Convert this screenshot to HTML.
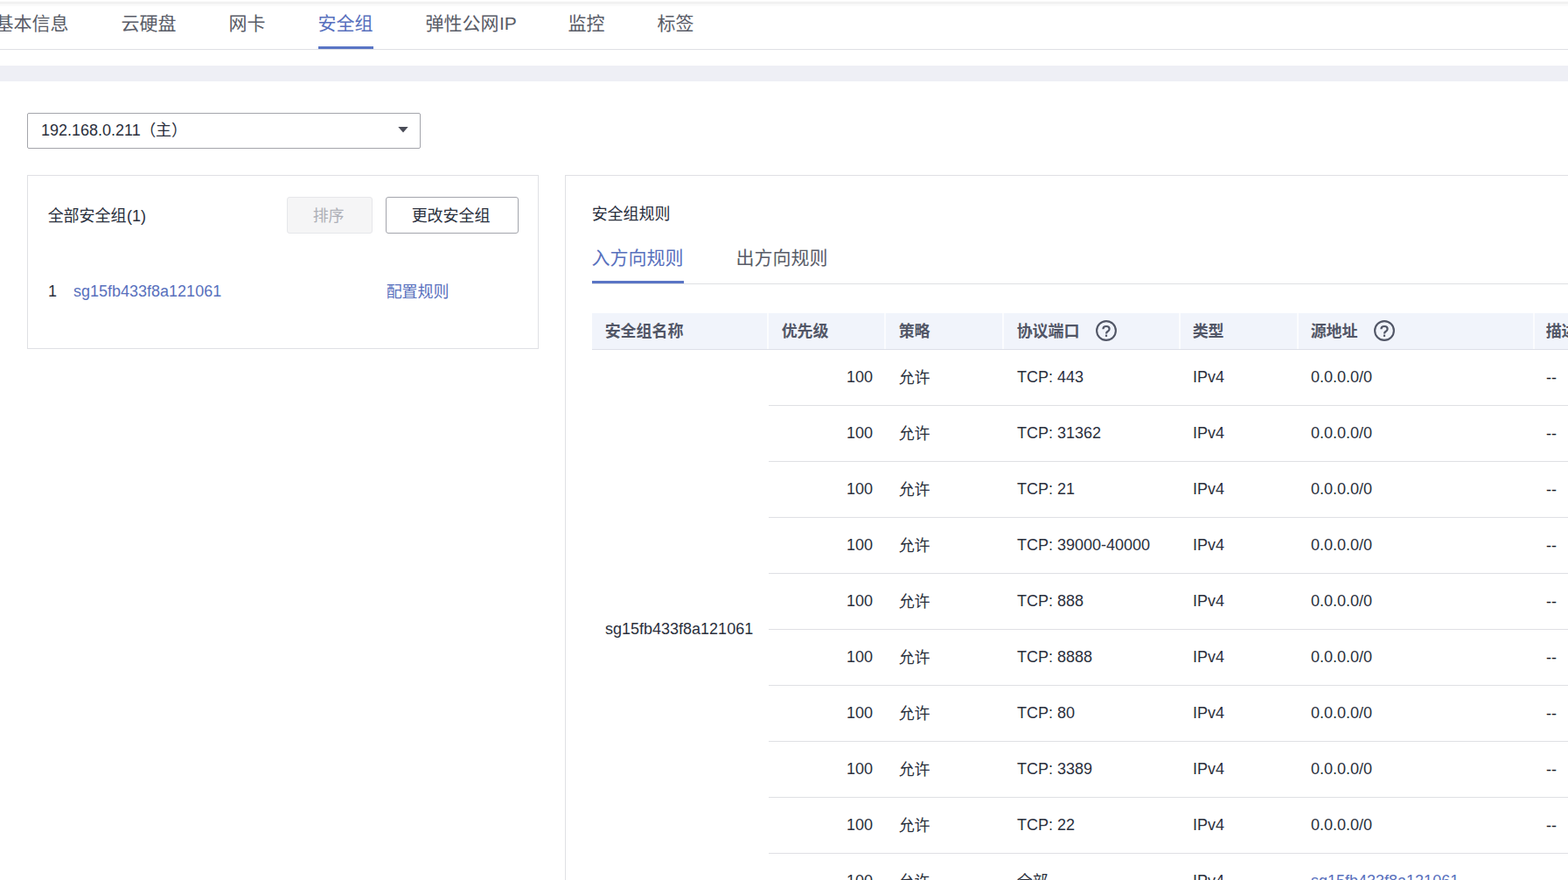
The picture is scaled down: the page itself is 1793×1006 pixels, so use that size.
<!DOCTYPE html>
<html lang="zh-CN"><head><meta charset="utf-8"><title>安全组</title>
<style>
html,body{margin:0;padding:0;background:#fff}
body{width:1793px;height:1006px;overflow:hidden;position:relative;font-family:"Liberation Sans","Noto Sans CJK SC",sans-serif;}
.t{position:absolute;white-space:nowrap;margin:0;overflow:visible}
</style></head><body>
<div style="position:absolute;left:0px;top:0px;width:1793px;height:8px;background:linear-gradient(#ffffff 0px,#ffffff 1px,#fbfbfb 1px,#fbfbfb 2px,#f2f2f2 2px,#f2f2f2 3px,#efefef 3px,#efefef 4px,#f6f6f6 4px,#f6f6f6 5px,#f9f9f9 5px,#f9f9f9 6px,#fafafa 6px,#fafafa 7px,#fefefe 7px,#fefefe 8px)"></div>
<nav aria-label="云服务器详情页签">
<div class="t" style="left:-5.42px;top:13.0px;font-size:21px;line-height:28px;color:#595c67;font-weight:normal">基本信息</div>
<div class="t" style="left:138.58px;top:13.0px;font-size:21px;line-height:28px;color:#595c67;font-weight:normal">云硬盘</div>
<div class="t" style="left:261.58px;top:13.0px;font-size:21px;line-height:28px;color:#595c67;font-weight:normal">网卡</div>
<div class="t" style="left:363.58px;top:13.0px;font-size:21px;line-height:28px;color:#5870bd;font-weight:normal">安全组</div>
<div class="t" style="left:486.58px;top:13.0px;font-size:21px;line-height:28px;color:#595c67;font-weight:normal">弹性公网</div>
<div class="t" style="left:571.00px;top:13.0px;font-size:21px;line-height:28px;color:#595c67;font-weight:normal">IP</div>
<div class="t" style="left:649.58px;top:13.0px;font-size:21px;line-height:28px;color:#595c67;font-weight:normal">监控</div>
<div class="t" style="left:751.58px;top:13.0px;font-size:21px;line-height:28px;color:#595c67;font-weight:normal">标签</div>
<div style="position:absolute;left:0px;top:56px;width:1793px;height:1px;background:#dfe0e4"></div>
<div style="position:absolute;left:364px;top:53px;width:63px;height:3px;background:#5a75c5"></div>
</nav>
<div style="position:absolute;left:0px;top:75px;width:1793px;height:18px;background:#eeeff5"></div>
<div role="combobox" aria-label="网卡">
<div style="position:absolute;left:31px;top:129px;width:448px;height:39px;border:1px solid #a4a5ab;border-radius:2px;background:#fff"></div>
<div class="t" style="left:47.00px;top:137.0px;font-size:18px;line-height:24px;color:#2a2f3c;font-weight:normal">192.168.0.211</div>
<div class="t" style="left:160.14px;top:137.0px;font-size:18px;line-height:24px;color:#2a2f3c;font-weight:normal">（主）</div>
<svg style="position:absolute;left:455px;top:145px" width="12" height="7" viewBox="0 0 12 7"><path d="M0.3 0H11.7L6 6.6Z" fill="#4a4c57"/></svg>
</div>
<section aria-label="全部安全组">
<div style="position:absolute;left:31px;top:200px;width:583px;height:197px;border:1px solid #dfe0e4;background:#fff"></div>
<div class="t" style="left:54.64px;top:235.0px;font-size:18px;line-height:24px;color:#2a2f3c;font-weight:normal">全部安全组</div>
<div class="t" style="left:145.00px;top:235.0px;font-size:18px;line-height:24px;color:#2a2f3c;font-weight:normal">(1)</div>
<div style="position:absolute;left:328px;top:225px;width:96px;height:40px;border:1px solid #e6e7ea;border-radius:3px;background:#f5f5f6"></div>
<div class="t" style="left:357.64px;top:235.0px;font-size:18px;line-height:24px;color:#adafb7;font-weight:normal">排序</div>
<div style="position:absolute;left:441px;top:225px;width:150px;height:40px;border:1px solid #a3a5ac;border-radius:3px;background:#fff"></div>
<div class="t" style="left:470.64px;top:235.0px;font-size:18px;line-height:24px;color:#2a2f3c;font-weight:normal">更改安全组</div>
<div class="t" style="left:55.00px;top:321.0px;font-size:18px;line-height:24px;color:#2a2f3c;font-weight:normal">1</div>
<a class="t" style="left:84.00px;top:321.0px;font-size:18px;line-height:24px;color:#5870bd;font-weight:normal">sg15fb433f8a121061</a>
<div class="t" style="left:441.64px;top:322.0px;font-size:18px;line-height:24px;color:#5870bd;font-weight:normal">配置规则</div>
</section>
<section aria-label="安全组规则">
<div style="position:absolute;left:646px;top:200px;width:1200px;height:900px;border:1px solid #dfe0e4;background:#fff"></div>
<div class="t" style="left:676.64px;top:233.0px;font-size:18px;line-height:24px;color:#2a2f3c;font-weight:normal">安全组规则</div>
<div class="t" style="left:676.58px;top:281.0px;font-size:21px;line-height:28px;color:#5870bd;font-weight:normal">入方向规则</div>
<div class="t" style="left:841.58px;top:281.0px;font-size:21px;line-height:28px;color:#595c67;font-weight:normal">出方向规则</div>
<div style="position:absolute;left:677px;top:324px;width:1200px;height:1px;background:#dfe0e4"></div>
<div style="position:absolute;left:677px;top:321px;width:105px;height:3px;background:#5a75c5"></div>
<div role="table" aria-label="入方向规则">
<div role="row">
<div style="position:absolute;left:677px;top:358px;width:1200px;height:41px;background:#f1f4fb"></div>
<div style="position:absolute;left:677px;top:399px;width:1200px;height:1px;background:#dde0e8"></div>
<div style="position:absolute;left:877px;top:358px;width:2px;height:41px;background:#fbfcfe"></div>
<div style="position:absolute;left:1011px;top:358px;width:2px;height:41px;background:#fbfcfe"></div>
<div style="position:absolute;left:1146px;top:358px;width:2px;height:41px;background:#fbfcfe"></div>
<div style="position:absolute;left:1348px;top:358px;width:2px;height:41px;background:#fbfcfe"></div>
<div style="position:absolute;left:1482.5px;top:358px;width:2px;height:41px;background:#fbfcfe"></div>
<div style="position:absolute;left:1752.5px;top:358px;width:2px;height:41px;background:#fbfcfe"></div>
<div class="t" style="left:691.64px;top:367.2px;font-size:18px;line-height:24px;color:#515666;font-weight:bold">安全组名称</div>
<div class="t" style="left:893.64px;top:367.2px;font-size:18px;line-height:24px;color:#515666;font-weight:bold">优先级</div>
<div class="t" style="left:1027.64px;top:367.2px;font-size:18px;line-height:24px;color:#515666;font-weight:bold">策略</div>
<div class="t" style="left:1162.64px;top:367.2px;font-size:18px;line-height:24px;color:#515666;font-weight:bold">协议端口</div>
<div class="t" style="left:1363.64px;top:367.2px;font-size:18px;line-height:24px;color:#515666;font-weight:bold">类型</div>
<div class="t" style="left:1498.64px;top:367.2px;font-size:18px;line-height:24px;color:#515666;font-weight:bold">源地址</div>
<div class="t" style="left:1767.64px;top:367.2px;font-size:18px;line-height:24px;color:#515666;font-weight:bold">描述</div>
<svg style="position:absolute;left:1252px;top:364.5px" width="26" height="26" viewBox="0 0 26 26"><circle cx="13" cy="13" r="10.9" fill="none" stroke="#515666" stroke-width="2.1"/><path d="M9.4 11.2C9.4 8.9 11 8 13 8C15 8 16.6 9.1 16.6 11C16.6 12.6 15.6 13.2 14.5 14C13.5 14.7 13 15.3 13 16.4" fill="none" stroke="#515666" stroke-width="2.2"/><rect x="11.9" y="17.6" width="2.2" height="2.3" fill="#515666"/></svg>
<svg style="position:absolute;left:1570px;top:364.5px" width="26" height="26" viewBox="0 0 26 26"><circle cx="13" cy="13" r="10.9" fill="none" stroke="#515666" stroke-width="2.1"/><path d="M9.4 11.2C9.4 8.9 11 8 13 8C15 8 16.6 9.1 16.6 11C16.6 12.6 15.6 13.2 14.5 14C13.5 14.7 13 15.3 13 16.4" fill="none" stroke="#515666" stroke-width="2.2"/><rect x="11.9" y="17.6" width="2.2" height="2.3" fill="#515666"/></svg>
</div>
<div role="row">
<div class="t" style="right:795px;top:419.0px;font-size:18px;line-height:24px;color:#2a2f3c;font-weight:normal">100</div>
<div class="t" style="left:1027.64px;top:419.5px;font-size:18px;line-height:24px;color:#2a2f3c;font-weight:normal">允许</div>
<div class="t" style="left:1163.00px;top:419.0px;font-size:18px;line-height:24px;color:#2a2f3c;font-weight:normal">TCP: 443</div>
<div class="t" style="left:1364.00px;top:419.0px;font-size:18px;line-height:24px;color:#2a2f3c;font-weight:normal">IPv4</div>
<div class="t" style="left:1499.00px;top:419.0px;font-size:18px;line-height:24px;color:#2a2f3c;font-weight:normal">0.0.0.0/0</div>
<div class="t" style="left:1768.00px;top:420.0px;font-size:18px;line-height:24px;color:#171a22;font-weight:normal">--</div>
<div style="position:absolute;left:879px;top:463px;width:1000px;height:1px;background:#dfe0e4"></div>
</div>
<div role="row">
<div class="t" style="right:795px;top:483.0px;font-size:18px;line-height:24px;color:#2a2f3c;font-weight:normal">100</div>
<div class="t" style="left:1027.64px;top:483.5px;font-size:18px;line-height:24px;color:#2a2f3c;font-weight:normal">允许</div>
<div class="t" style="left:1163.00px;top:483.0px;font-size:18px;line-height:24px;color:#2a2f3c;font-weight:normal">TCP: 31362</div>
<div class="t" style="left:1364.00px;top:483.0px;font-size:18px;line-height:24px;color:#2a2f3c;font-weight:normal">IPv4</div>
<div class="t" style="left:1499.00px;top:483.0px;font-size:18px;line-height:24px;color:#2a2f3c;font-weight:normal">0.0.0.0/0</div>
<div class="t" style="left:1768.00px;top:484.0px;font-size:18px;line-height:24px;color:#171a22;font-weight:normal">--</div>
<div style="position:absolute;left:879px;top:527px;width:1000px;height:1px;background:#dfe0e4"></div>
</div>
<div role="row">
<div class="t" style="right:795px;top:547.0px;font-size:18px;line-height:24px;color:#2a2f3c;font-weight:normal">100</div>
<div class="t" style="left:1027.64px;top:547.5px;font-size:18px;line-height:24px;color:#2a2f3c;font-weight:normal">允许</div>
<div class="t" style="left:1163.00px;top:547.0px;font-size:18px;line-height:24px;color:#2a2f3c;font-weight:normal">TCP: 21</div>
<div class="t" style="left:1364.00px;top:547.0px;font-size:18px;line-height:24px;color:#2a2f3c;font-weight:normal">IPv4</div>
<div class="t" style="left:1499.00px;top:547.0px;font-size:18px;line-height:24px;color:#2a2f3c;font-weight:normal">0.0.0.0/0</div>
<div class="t" style="left:1768.00px;top:548.0px;font-size:18px;line-height:24px;color:#171a22;font-weight:normal">--</div>
<div style="position:absolute;left:879px;top:591px;width:1000px;height:1px;background:#dfe0e4"></div>
</div>
<div role="row">
<div class="t" style="right:795px;top:611.0px;font-size:18px;line-height:24px;color:#2a2f3c;font-weight:normal">100</div>
<div class="t" style="left:1027.64px;top:611.5px;font-size:18px;line-height:24px;color:#2a2f3c;font-weight:normal">允许</div>
<div class="t" style="left:1163.00px;top:611.0px;font-size:18px;line-height:24px;color:#2a2f3c;font-weight:normal">TCP: 39000-40000</div>
<div class="t" style="left:1364.00px;top:611.0px;font-size:18px;line-height:24px;color:#2a2f3c;font-weight:normal">IPv4</div>
<div class="t" style="left:1499.00px;top:611.0px;font-size:18px;line-height:24px;color:#2a2f3c;font-weight:normal">0.0.0.0/0</div>
<div class="t" style="left:1768.00px;top:612.0px;font-size:18px;line-height:24px;color:#171a22;font-weight:normal">--</div>
<div style="position:absolute;left:879px;top:655px;width:1000px;height:1px;background:#dfe0e4"></div>
</div>
<div role="row">
<div class="t" style="right:795px;top:675.0px;font-size:18px;line-height:24px;color:#2a2f3c;font-weight:normal">100</div>
<div class="t" style="left:1027.64px;top:675.5px;font-size:18px;line-height:24px;color:#2a2f3c;font-weight:normal">允许</div>
<div class="t" style="left:1163.00px;top:675.0px;font-size:18px;line-height:24px;color:#2a2f3c;font-weight:normal">TCP: 888</div>
<div class="t" style="left:1364.00px;top:675.0px;font-size:18px;line-height:24px;color:#2a2f3c;font-weight:normal">IPv4</div>
<div class="t" style="left:1499.00px;top:675.0px;font-size:18px;line-height:24px;color:#2a2f3c;font-weight:normal">0.0.0.0/0</div>
<div class="t" style="left:1768.00px;top:676.0px;font-size:18px;line-height:24px;color:#171a22;font-weight:normal">--</div>
<div style="position:absolute;left:879px;top:719px;width:1000px;height:1px;background:#dfe0e4"></div>
</div>
<div role="row">
<div class="t" style="right:795px;top:739.0px;font-size:18px;line-height:24px;color:#2a2f3c;font-weight:normal">100</div>
<div class="t" style="left:1027.64px;top:739.5px;font-size:18px;line-height:24px;color:#2a2f3c;font-weight:normal">允许</div>
<div class="t" style="left:1163.00px;top:739.0px;font-size:18px;line-height:24px;color:#2a2f3c;font-weight:normal">TCP: 8888</div>
<div class="t" style="left:1364.00px;top:739.0px;font-size:18px;line-height:24px;color:#2a2f3c;font-weight:normal">IPv4</div>
<div class="t" style="left:1499.00px;top:739.0px;font-size:18px;line-height:24px;color:#2a2f3c;font-weight:normal">0.0.0.0/0</div>
<div class="t" style="left:1768.00px;top:740.0px;font-size:18px;line-height:24px;color:#171a22;font-weight:normal">--</div>
<div style="position:absolute;left:879px;top:783px;width:1000px;height:1px;background:#dfe0e4"></div>
</div>
<div role="row">
<div class="t" style="right:795px;top:803.0px;font-size:18px;line-height:24px;color:#2a2f3c;font-weight:normal">100</div>
<div class="t" style="left:1027.64px;top:803.5px;font-size:18px;line-height:24px;color:#2a2f3c;font-weight:normal">允许</div>
<div class="t" style="left:1163.00px;top:803.0px;font-size:18px;line-height:24px;color:#2a2f3c;font-weight:normal">TCP: 80</div>
<div class="t" style="left:1364.00px;top:803.0px;font-size:18px;line-height:24px;color:#2a2f3c;font-weight:normal">IPv4</div>
<div class="t" style="left:1499.00px;top:803.0px;font-size:18px;line-height:24px;color:#2a2f3c;font-weight:normal">0.0.0.0/0</div>
<div class="t" style="left:1768.00px;top:804.0px;font-size:18px;line-height:24px;color:#171a22;font-weight:normal">--</div>
<div style="position:absolute;left:879px;top:847px;width:1000px;height:1px;background:#dfe0e4"></div>
</div>
<div role="row">
<div class="t" style="right:795px;top:867.0px;font-size:18px;line-height:24px;color:#2a2f3c;font-weight:normal">100</div>
<div class="t" style="left:1027.64px;top:867.5px;font-size:18px;line-height:24px;color:#2a2f3c;font-weight:normal">允许</div>
<div class="t" style="left:1163.00px;top:867.0px;font-size:18px;line-height:24px;color:#2a2f3c;font-weight:normal">TCP: 3389</div>
<div class="t" style="left:1364.00px;top:867.0px;font-size:18px;line-height:24px;color:#2a2f3c;font-weight:normal">IPv4</div>
<div class="t" style="left:1499.00px;top:867.0px;font-size:18px;line-height:24px;color:#2a2f3c;font-weight:normal">0.0.0.0/0</div>
<div class="t" style="left:1768.00px;top:868.0px;font-size:18px;line-height:24px;color:#171a22;font-weight:normal">--</div>
<div style="position:absolute;left:879px;top:911px;width:1000px;height:1px;background:#dfe0e4"></div>
</div>
<div role="row">
<div class="t" style="right:795px;top:931.0px;font-size:18px;line-height:24px;color:#2a2f3c;font-weight:normal">100</div>
<div class="t" style="left:1027.64px;top:931.5px;font-size:18px;line-height:24px;color:#2a2f3c;font-weight:normal">允许</div>
<div class="t" style="left:1163.00px;top:931.0px;font-size:18px;line-height:24px;color:#2a2f3c;font-weight:normal">TCP: 22</div>
<div class="t" style="left:1364.00px;top:931.0px;font-size:18px;line-height:24px;color:#2a2f3c;font-weight:normal">IPv4</div>
<div class="t" style="left:1499.00px;top:931.0px;font-size:18px;line-height:24px;color:#2a2f3c;font-weight:normal">0.0.0.0/0</div>
<div class="t" style="left:1768.00px;top:932.0px;font-size:18px;line-height:24px;color:#171a22;font-weight:normal">--</div>
<div style="position:absolute;left:879px;top:975px;width:1000px;height:1px;background:#dfe0e4"></div>
</div>
<div role="row">
<div class="t" style="right:795px;top:995.0px;font-size:18px;line-height:24px;color:#2a2f3c;font-weight:normal">100</div>
<div class="t" style="left:1027.64px;top:995.5px;font-size:18px;line-height:24px;color:#2a2f3c;font-weight:normal">允许</div>
<div class="t" style="left:1162.64px;top:995.5px;font-size:18px;line-height:24px;color:#2a2f3c;font-weight:normal">全部</div>
<div class="t" style="left:1364.00px;top:995.0px;font-size:18px;line-height:24px;color:#2a2f3c;font-weight:normal">IPv4</div>
<a class="t" style="left:1499.00px;top:995.0px;font-size:18px;line-height:24px;color:#5870bd;font-weight:normal">sg15fb433f8a121061</a>
<div class="t" style="left:1768.00px;top:996.0px;font-size:18px;line-height:24px;color:#171a22;font-weight:normal">--</div>
<div style="position:absolute;left:879px;top:1039px;width:1000px;height:1px;background:#dfe0e4"></div>
</div>
<div class="t" style="left:692.00px;top:707.0px;font-size:18px;line-height:24px;color:#2a2f3c;font-weight:normal">sg15fb433f8a121061</div>
</div>
</section>
</body></html>
